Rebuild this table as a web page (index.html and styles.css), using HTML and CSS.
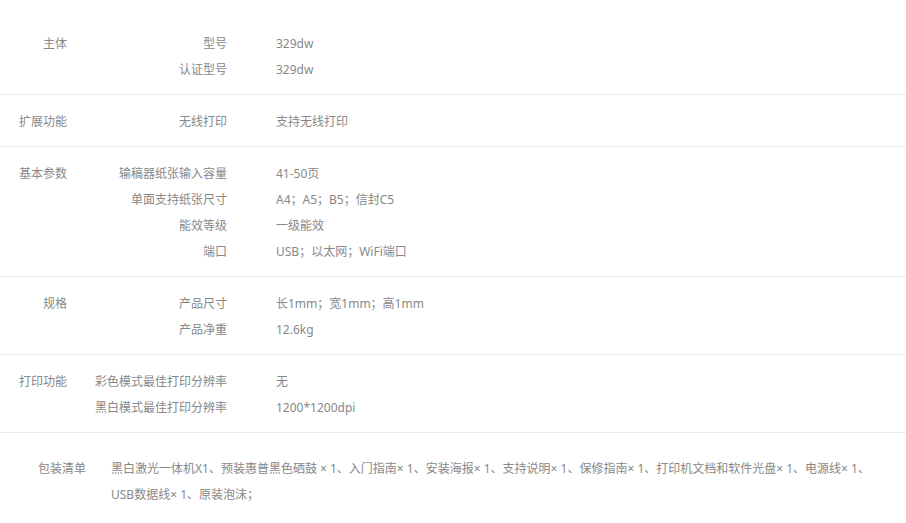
FILE: index.html
```html
<!DOCTYPE html>
<html lang="zh">
<head>
<meta charset="utf-8">
<link rel="stylesheet" href="styles.css">
</head>
<body>
<div class="specs">
  <div class="section first">
    <div class="group">主体</div>
    <div class="items">
      <div class="row"><div class="key">型号</div><div class="val">329dw</div></div>
      <div class="row"><div class="key">认证型号</div><div class="val">329dw</div></div>
    </div>
  </div>
  <div class="section">
    <div class="group">扩展功能</div>
    <div class="items">
      <div class="row"><div class="key">无线打印</div><div class="val">支持无线打印</div></div>
    </div>
  </div>
  <div class="section">
    <div class="group">基本参数</div>
    <div class="items">
      <div class="row"><div class="key">输稿器纸张输入容量</div><div class="val">41-50页</div></div>
      <div class="row"><div class="key">单面支持纸张尺寸</div><div class="val">A4；A5；B5；信封C5</div></div>
      <div class="row"><div class="key">能效等级</div><div class="val">一级能效</div></div>
      <div class="row"><div class="key">端口</div><div class="val">USB；以太网；WiFi端口</div></div>
    </div>
  </div>
  <div class="section">
    <div class="group">规格</div>
    <div class="items">
      <div class="row"><div class="key">产品尺寸</div><div class="val">长1mm；宽1mm；高1mm</div></div>
      <div class="row"><div class="key">产品净重</div><div class="val">12.6kg</div></div>
    </div>
  </div>
  <div class="section">
    <div class="group">打印功能</div>
    <div class="items">
      <div class="row"><div class="key">彩色模式最佳打印分辨率</div><div class="val">无</div></div>
      <div class="row"><div class="key">黑白模式最佳打印分辨率</div><div class="val">1200*1200dpi</div></div>
    </div>
  </div>
  <div class="package">
    <div class="pkg-label">包装清单</div>
    <div class="pkg-text">黑白激光一体机X1、预装惠普黑色硒鼓 × 1、入门指南× 1、安装海报× 1、支持说明× 1、保修指南× 1、打印机文档和软件光盘× 1、电源线× 1、USB数据线× 1、原装泡沫；</div>
  </div>
</div>
</body>
</html>
```

FILE: styles.css
```css
html, body {
  margin: 0;
  padding: 0;
  background: #fff;
}
body {
  font-family: "Noto Sans", "Noto Sans CJK SC", sans-serif;
  font-size: 12px;
  color: #888;
}
.specs {
  width: 906px;
}
.section {
  display: flex;
  padding: 14px 0 11px;
  border-bottom: 1px solid #ebebeb;
}
.section.first {
  padding-top: 31px;
}
.group {
  width: 67px;
  text-align: right;
  line-height: 26px;
  flex-shrink: 0;
}
.items {
  display: flex;
  flex-direction: column;
}
.row {
  display: flex;
  line-height: 26px;
  height: 26px;
}
.key {
  width: 160px;
  text-align: right;
  flex-shrink: 0;
}
.val {
  padding-left: 49px;
  white-space: nowrap;
}
.package {
  display: flex;
  padding: 23px 20px 20px 38px;
  line-height: 26px;
}
.pkg-label {
  width: 48px;
  flex-shrink: 0;
  margin-right: 25px;
}
.pkg-text {
  flex: 1;
}
```
